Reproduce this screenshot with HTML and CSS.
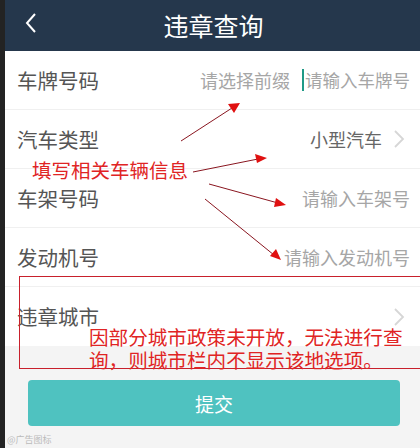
FILE: index.html
```html
<!DOCTYPE html>
<html lang="zh">
<head>
<meta charset="utf-8">
<link rel="stylesheet" href="styles.css">
</head>
<body>
<div class="screen">
  <div class="edge"></div>
  <div class="app">
    <header class="topbar">
      <svg class="back" width="14" height="22" viewBox="0 0 14 22"><path d="M11 2 L3 11 L11 20" fill="none" stroke="#fff" stroke-width="2"/></svg>
      <h1 class="title">违章查询</h1>
    </header>
    <div class="form">
      <div class="row">
        <span class="label">车牌号码</span>
        <span class="value">
          <span class="ph">请选择前缀</span>
          <span class="cursor"></span>
          <span class="ph plate">请输入车牌号</span>
        </span>
      </div>
      <div class="row">
        <span class="label">汽车类型</span>
        <span class="value">
          <span class="val">小型汽车</span>
          <svg class="chev" width="12" height="18" viewBox="0 0 12 18"><path d="M2 1 L10 9 L2 17" fill="none" stroke="#d6d6d6" stroke-width="1.8"/></svg>
        </span>
      </div>
      <div class="row">
        <span class="label">车架号码</span>
        <span class="value"><span class="ph">请输入车架号</span></span>
      </div>
      <div class="row">
        <span class="label">发动机号</span>
        <span class="value"><span class="ph">请输入发动机号</span></span>
      </div>
      <div class="row last">
        <span class="label">违章城市</span>
        <span class="value">
          <svg class="chev" width="12" height="18" viewBox="0 0 12 18"><path d="M2 1 L10 9 L2 17" fill="none" stroke="#d6d6d6" stroke-width="1.8"/></svg>
        </span>
      </div>
    </div>
    <div class="footer">
      <button class="submit">提交</button>
      <span class="mark">@广告图标</span>
    </div>
  </div>

  <div class="note-title">填写相关车辆信息</div>
  <div class="note-box">因部分城市政策未开放，无法进行查询，则城市栏内不显示该地选项。</div>
  <svg class="arrows" width="420" height="448" viewBox="0 0 420 448">
    <g stroke="#8a1620" stroke-width="1" fill="none">
      <line x1="181" y1="141" x2="232" y2="108"/>
      <line x1="193" y1="172" x2="258" y2="159"/>
      <line x1="209" y1="184" x2="278" y2="203"/>
      <line x1="205" y1="199" x2="274" y2="255"/>
    </g>
    <g fill="#e01010">
      <polygon points="240,103 228,104 234,113"/>
      <polygon points="267,158 255,154 257,163"/>
      <polygon points="286,205 276,198 274,207"/>
      <polygon points="281,260 276,249 270,256"/>
    </g>
  </svg>
</div>
</body>
</html>
```

FILE: styles.css
```css
* { box-sizing: border-box; }
html, body { margin: 0; padding: 0; }
body {
  width: 420px;
  height: 448px;
  overflow: hidden;
  font-family: "Noto Sans CJK SC", "Noto Sans", sans-serif;
  background: #f4f4f4;
}
.screen {
  position: relative;
  display: flex;
  width: 420px;
  height: 448px;
}
.edge {
  width: 5px;
  background: #232323;
  flex: none;
}
.app {
  flex: 1;
  display: flex;
  flex-direction: column;
  background: #f4f4f4;
}
.topbar {
  height: 51px;
  background: #25374c;
  display: flex;
  align-items: center;
  justify-content: center;
  position: relative;
}
.back {
  position: absolute;
  left: 19px;
  top: 12px;
}
.title {
  margin: 0;
  color: #fff;
  font-weight: 400;
  font-size: 25px;
  line-height: 1;
  padding-left: 2px;
}
.form {
  background: #fff;
}
.row {
  height: 59px;
  display: flex;
  align-items: center;
  justify-content: space-between;
  padding: 0 10px 0 12px;
  border-bottom: 1px solid #f0f0f0;
}
.row.last {
  border-bottom: none;
}
.label {
  font-size: 20.5px;
  color: #555;
  line-height: 1;
}
.value {
  display: flex;
  align-items: center;
}
.ph {
  font-size: 18px;
  color: #a6a6a6;
  line-height: 1;
}
.ph.plate {
  font-size: 17.5px;
}
.val {
  font-size: 18px;
  color: #666;
  line-height: 1;
  margin-right: 11px;
}
.cursor {
  width: 2px;
  height: 22px;
  background: #1f9a86;
  margin: 0 1px 0 12px;
}
.chev {
  display: block;
  margin-right: 5px;
}
.footer {
  flex: 1;
  padding: 34px 20px 0 23px;
  position: relative;
}
.submit {
  display: block;
  width: 100%;
  height: 46px;
  border: none;
  border-radius: 4px;
  background: #4fc2c0;
  color: #fff;
  font-family: "Noto Sans CJK SC", sans-serif;
  font-size: 19px;
}
.mark {
  position: absolute;
  left: 2px;
  bottom: 2px;
  font-size: 9px;
  color: #bbb;
}
.note-title {
  position: absolute;
  left: 32px;
  top: 158px;
  font-size: 19.5px;
  line-height: 24px;
  color: #e02424;
}
.note-box {
  position: absolute;
  left: 19px;
  top: 276px;
  width: 401px;
  height: 93px;
  border: 1px solid #c8202c;
  border-right: none;
  padding: 48px 12px 0 69px;
  font-size: 19.6px;
  line-height: 23px;
  color: #e02424;
}
.arrows {
  position: absolute;
  left: 0;
  top: 0;
  pointer-events: none;
}
```
